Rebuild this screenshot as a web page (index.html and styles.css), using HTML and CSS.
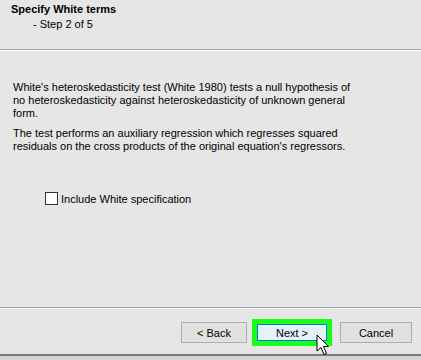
FILE: index.html
```html
<!DOCTYPE html>
<html lang="en">
<head>
    <meta charset="UTF-8">
    <title>Specify White terms</title>
    <link rel="stylesheet" href="styles.css">
</head>
<body>
    <div class="wizard">
        <div class="wizard-header">
            <div class="wizard-title">Specify White terms</div>
            <div class="wizard-step">- Step 2 of 5</div>
        </div>

        <div class="wizard-body">
            <p>White's heteroskedasticity test (White 1980) tests a null hypothesis of no heteroskedasticity against heteroskedasticity of unknown general form.</p>
            <p>The test performs an auxiliary regression which regresses squared residuals on the cross products of the original equation's regressors.</p>

            <label class="check">
                <span class="check-box"></span>
                <span>Include White specification</span>
            </label>
        </div>

        <div class="wizard-footer">
            <button class="btn btn-back">&lt; Back</button>
            <div class="highlight">
                <button class="btn btn-next">Next &gt;</button>
                <svg class="cursor" width="14" height="22" viewBox="0 0 14 22">
                    <path d="M1 1 L1 17 L5 13.5 L8 20.5 L10.5 19.5 L7.5 12.5 L12.5 12.5 Z" fill="#fff" stroke="#000" stroke-width="1" stroke-linejoin="miter"/>
                </svg>
            </div>
            <button class="btn">Cancel</button>
        </div>
        <div class="wizard-edge"></div>
    </div>
</body>
</html>
```

FILE: styles.css
```css
body {
    margin: 0;
    background-color: #e6e6e6;
    font-family: "Liberation Sans", Arial, sans-serif;
    font-size: 11px;
    color: #000;
}

.wizard {
    width: 421px;
    height: 360px;
    display: flex;
    flex-direction: column;
    background-color: #e6e6e6;
}

.wizard-header {
    height: 50px;
    padding: 2px 0 0 11px;
    box-sizing: border-box;
    border-bottom: 1px solid #a0a0a0;
    box-shadow: 0 1px 0 #fff;
    margin-bottom: 1px;
}

.wizard-title {
    font-weight: bold;
    line-height: 13px;
    padding-top: 1px;
}

.wizard-step {
    line-height: 13px;
    padding: 2px 0 0 22px;
}

.wizard-body {
    flex: 1;
    padding: 30px 0 0 13px;
}

.wizard-body p {
    margin: 0 0 7px 0;
    line-height: 13px;
    width: 350px;
}

.check {
    display: flex;
    align-items: center;
    gap: 3px;
    margin: 39px 0 0 32px;
}

.check-box {
    width: 11px;
    height: 11px;
    border: 1px solid #333;
    background-color: #fff;
}

.wizard-footer {
    height: 47px;
    box-sizing: border-box;
    border-top: 1px solid #a0a0a0;
    box-shadow: inset 0 1px 0 #fff;
    display: flex;
    align-items: center;
    justify-content: flex-end;
    padding: 3px 9px 0 0;
    gap: 9px;
}

.btn {
    width: 72px;
    height: 21px;
    background-color: #e1e1e1;
    border: 1px solid #adadad;
    font-family: "Liberation Sans", Arial, sans-serif;
    font-size: 11px;
    color: #000;
    padding: 0;
}

.btn-back {
    width: 66px;
    margin-right: -4px;
}

.highlight {
    position: relative;
    border: 5px solid #1aff1a;
    margin-right: -1px;
}

.btn-next {
    width: 70px;
    height: 17px;
    background-color: #e5f1fb;
    border: 1px solid #0078d7;
    display: block;
}

.cursor {
    position: absolute;
    left: 59px;
    top: 10px;
}

.wizard-edge {
    height: 6px;
    border-top: 2px solid #7a7a7a;
    background-color: #d4d4d4;
    box-sizing: border-box;
}
```
